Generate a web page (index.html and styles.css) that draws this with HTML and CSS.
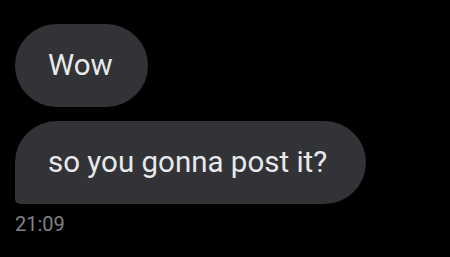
FILE: index.html
```html
<!DOCTYPE html>
<html lang="en">
<head>
    <meta charset="UTF-8">
    <meta name="viewport" content="width=device-width, initial-scale=1.0">
    <title>Messages</title>
    <link rel="stylesheet" href="styles.css">
</head>
<body>
    <div class="chat">
        <div class="bubble first">Wow</div>
        <div class="bubble last">so you gonna post it?</div>
        <div class="time">21:09</div>
    </div>
</body>
</html>
```

FILE: styles.css
```css
body {
    margin: 0;
    background-color: #000;
    font-family: 'Roboto', sans-serif;
    width: 450px;
    height: 257px;
    overflow: hidden;
}
.chat {
    display: flex;
    flex-direction: column;
    align-items: flex-start;
    gap: 14px;
    padding: 24px 15px 0;
}
.bubble {
    background-color: #313336;
    color: #e7e9ea;
    font-size: 29.5px;
    line-height: 83px;
    height: 83px;
    padding: 0 39px 0 33px;
    border-radius: 42px;
    box-sizing: border-box;
}
.bubble.first {
    padding-right: 35px;
}
.bubble.last {
    border-bottom-left-radius: 5px;
}
.time {
    color: #7f8387;
    font-size: 20px;
    line-height: 20px;
    margin-top: -4px;
}
```
